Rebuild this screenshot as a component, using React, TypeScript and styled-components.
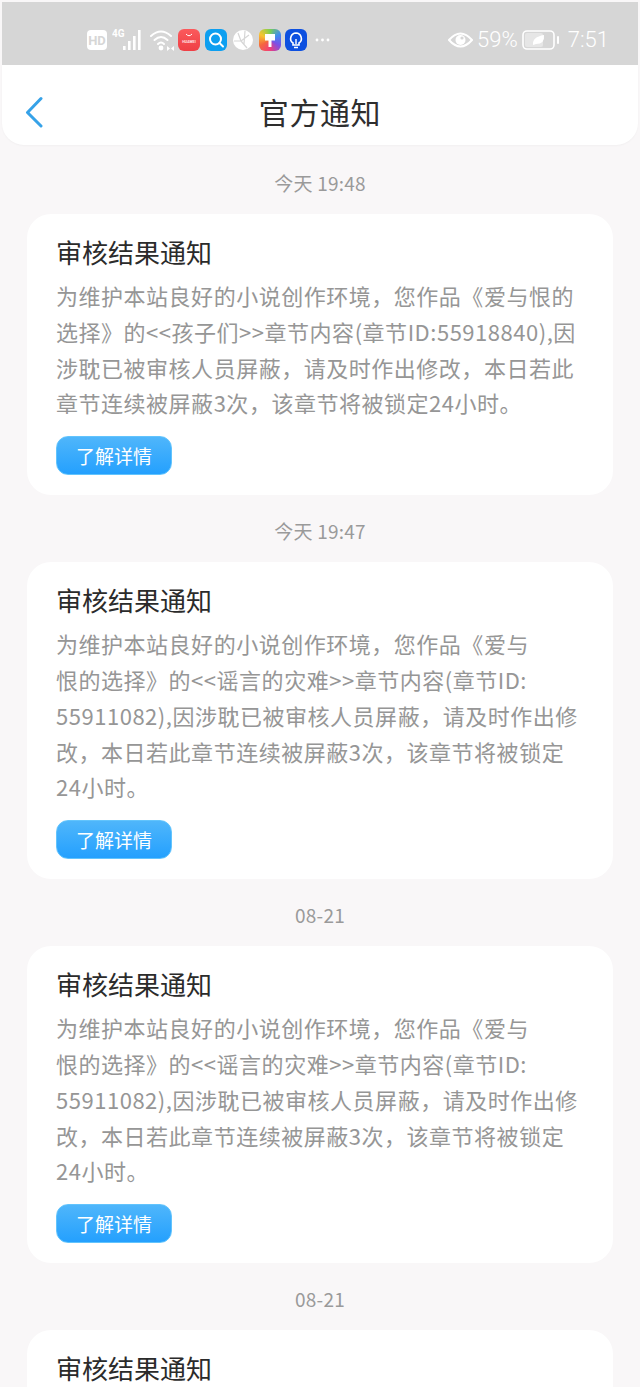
import React from "react";
import styled, { createGlobalStyle } from "styled-components";

const Global = createGlobalStyle`
  html, body { margin: 0; padding: 0; background: #f9f7f8; }
  body { font-family: "Noto Sans CJK SC", "Noto Sans", sans-serif; overflow: hidden; }
  #root { width: 640px; height: 1387px; overflow: hidden; }
`;

const Page = styled.div`
  width: 640px;
  height: 1387px;
  overflow: hidden;
  background: #f9f7f8;
  display: flex;
  flex-direction: column;
`;

const StatusBar = styled.div`
  height: 63px;
  margin: 2px 2px 0;
  background: #d6d6d6;
  display: flex;
  align-items: center;
  flex-shrink: 0;
  padding: 12px 0 0 85px;
  box-sizing: border-box;
  color: #fff;
`;

const StatusLeft = styled.div`
  display: flex;
  align-items: center;
`;

const StatusRight = styled.div`
  margin-left: auto;
  margin-right: 29px;
  display: flex;
  align-items: center;
`;

const StatusText = styled.span<{ $ml?: number }>`
  font-family: "Roboto", sans-serif;
  font-size: 22px;
  font-weight: 300;
  color: #fff;
  line-height: 24px;
  margin-left: ${(p) => p.$ml ?? 0}px;
`;

const AppIcon = styled.div<{ $bg: string; $ml?: number }>`
  width: 22px;
  height: 22px;
  border-radius: 6px;
  background: ${(p) => p.$bg};
  margin-left: ${(p) => p.$ml ?? 0}px;
  display: flex;
  align-items: center;
  justify-content: center;
  flex-shrink: 0;
`;

const Header = styled.header`
  height: 80px;
  margin: 0 2px;
  flex-shrink: 0;
  background: #fff;
  border-radius: 0 0 22px 22px;
  box-shadow: 0 1px 2px rgba(0, 0, 0, 0.03);
  position: relative;
  display: flex;
  align-items: center;
  justify-content: center;
`;

const BackIcon = styled.svg`
  position: absolute;
  left: 22px;
  top: 31px;
`;

const HeaderTitle = styled.h1`
  margin: 0;
  font-size: 30px;
  font-weight: 400;
  color: #2e2e2e;
  line-height: 40px;
  letter-spacing: 0.6px;
  position: relative;
  top: 6px;
`;

const Feed = styled.main`
  display: flex;
  flex-direction: column;
  padding: 2px 27px 0;
`;

const Stamp = styled.div`
  height: 67px;
  display: flex;
  align-items: center;
  justify-content: center;
  font-size: 19px;
  color: #9a9a9a;
  letter-spacing: 0.25px;
  padding-top: 3px;
  box-sizing: border-box;
  font-family: "Noto Sans CJK SC", sans-serif;
`;

const Card = styled.article`
  background: #fff;
  border-radius: 24px;
  padding: 20px 30px 20px 30px;
  display: flex;
  flex-direction: column;
  align-items: flex-start;
`;

const CardTitle = styled.h2`
  margin: 0 0 0 -1px;
  font-size: 26px;
  font-weight: 400;
  line-height: 36px;
  color: #2b2b2b;
  white-space: nowrap;
`;

const Body = styled.div`
  margin-top: 8px;
  margin-left: -1px;
  color: #969696;
  font-size: 22px;
  line-height: 35.8px;
  letter-spacing: 0.52px;
  white-space: nowrap;
`;

const Line = styled.div``;

const Button = styled.button`
  margin-top: 15px;
  margin-left: -1px;
  width: 116px;
  height: 39px;
  border: 1px solid #62c4fd;
  box-sizing: border-box;
  padding: 0;
  border-radius: 12px;
  background: linear-gradient(180deg, #4fb6fb 0%, #24a0fe 100%);
  color: #fff;
  font-family: "Noto Sans CJK SC", sans-serif;
  font-size: 19px;
  line-height: 37px;
`;

const lines1 = [
  "为维护本站良好的小说创作环境，您作品《爱与恨的",
  "选择》的<<孩子们>>章节内容(章节ID:55918840),因",
  "涉耽已被审核人员屏蔽，请及时作出修改，本日若此",
  "章节连续被屏蔽3次，该章节将被锁定24小时。",
];
const lines2 = [
  "为维护本站良好的小说创作环境，您作品《爱与",
  "恨的选择》的<<谣言的灾难>>章节内容(章节ID:",
  "55911082),因涉耽已被审核人员屏蔽，请及时作出修",
  "改，本日若此章节连续被屏蔽3次，该章节将被锁定",
  "24小时。",
];

const items = [
  { stamp: "今天 19:48", lines: lines1 },
  { stamp: "今天 19:47", lines: lines2 },
  { stamp: "08-21", lines: lines2 },
  { stamp: "08-21", lines: lines2 },
];

function Signal() {
  return (
    <svg width="34" height="26" viewBox="0 0 34 26" style={{ marginLeft: 5 }}>
      <text x="0" y="10" fontSize="10" fontWeight="700" fill="#fff" fontFamily="Roboto, sans-serif">4G</text>
      <g fill="#fff">
        <rect x="11" y="19" width="2.6" height="4" />
        <rect x="16" y="14" width="2.6" height="9" />
        <rect x="21" y="9" width="2.6" height="14" />
        <rect x="26" y="3" width="2.6" height="20" />
      </g>
    </svg>
  );
}

export default function App() {
  return (
    <Page>
      <Global />
      <StatusBar>
        <StatusLeft>
          <svg width="20" height="20" viewBox="0 0 20 20">
            <rect width="20" height="20" rx="4" fill="#fff" />
            <text x="10" y="15" textAnchor="middle" fontSize="13" fontWeight="700" fill="#d6d6d6" fontFamily="Roboto, sans-serif">HD</text>
          </svg>
          <Signal />
          <svg width="26" height="24" viewBox="0 0 26 24" style={{ marginLeft: 4 }}>
            <g fill="none" stroke="#fff" strokeWidth="2" strokeLinecap="round">
              <path d="M1 8 Q11 -1 21 8" />
              <path d="M4.5 12 Q11 6 17.5 12" />
              <path d="M8 16 Q11 13 14 16" />
            </g>
            <circle cx="11" cy="20" r="2.4" fill="#fff" />
            <path d="M17 18l3 2.5-3 2.5z M24 18l-3 2.5 3 2.5z" fill="#fff" />
          </svg>
          <AppIcon $bg="linear-gradient(180deg,#fb5a5c,#ef3f45)" $ml={2}>
            <svg width="22" height="22" viewBox="0 0 22 22">
              <path d="M8 5q3 3.5 6 0" fill="none" stroke="#fff" strokeWidth="1" />
              <text x="11" y="14" textAnchor="middle" fontSize="3.6" fontWeight="700" fill="#ffe3e3" fontFamily="Roboto, sans-serif">HUAWEI</text>
            </svg>
          </AppIcon>
          <AppIcon $bg="#0d9ff0" $ml={5}>
            <svg width="22" height="22" viewBox="0 0 22 22">
              <circle cx="10.5" cy="10" r="5.5" fill="none" stroke="#fff" strokeWidth="2" />
              <path d="M14.5 14l3.5 3.5" stroke="#fff" strokeWidth="2" strokeLinecap="round" />
            </svg>
          </AppIcon>
          <svg width="22" height="22" viewBox="0 0 22 22" style={{ marginLeft: 5 }}>
            <circle cx="11" cy="11" r="10" fill="#fff" />
            <path d="M6 4l3 8-7 0M9 12l6 7M9 12l8-6M13 2l-1 13" stroke="#d6d6d6" strokeWidth="1.2" fill="none" />
          </svg>
          <AppIcon $bg="conic-gradient(from 0deg,#7ccf52,#3f8cf0,#7a50e8,#f03f7a,#f5663f,#f7c531,#7ccf52)" $ml={5}>
            <svg width="22" height="22" viewBox="0 0 22 22">
              <path d="M6 5h10v6.5h-3.5v6.5h-3v-6.5H6z" fill="#fff" />
            </svg>
          </AppIcon>
          <AppIcon $bg="#0d50e0" $ml={4}>
            <svg width="22" height="22" viewBox="0 0 22 22">
              <path d="M11 4a5.5 5.5 0 0 0-3 10v2h6v-2a5.5 5.5 0 0 0-3-10z" fill="none" stroke="#fff" strokeWidth="1.6" />
              <path d="M9 18.5h4M11 10v5" stroke="#fff" strokeWidth="1.4" />
            </svg>
          </AppIcon>
          <svg width="18" height="6" viewBox="0 0 18 6" style={{ marginLeft: 7 }}>
            <g fill="#fff">
              <circle cx="3" cy="3" r="1.4" />
              <circle cx="8.5" cy="3" r="1.4" />
              <circle cx="14" cy="3" r="1.4" />
            </g>
          </svg>
        </StatusLeft>
        <StatusRight>
          <svg width="25" height="18" viewBox="0 0 25 18">
            <path d="M1 9Q12.5 -4 24 9Q12.5 22 1 9z" fill="none" stroke="#fff" strokeWidth="2" />
            <circle cx="12.5" cy="9" r="5" fill="#fff" />
            <circle cx="14" cy="7" r="1.6" fill="#d6d6d6" />
          </svg>
          <StatusText $ml={4}>59%</StatusText>
          <svg width="38" height="22" viewBox="0 0 38 22" style={{ marginLeft: 4 }}>
            <rect x="1" y="2" width="31" height="18" rx="4" fill="none" stroke="#fff" strokeWidth="1.6" />
            <rect x="3" y="4" width="18" height="14" rx="2" fill="#e6e6e6" />
            <rect x="35" y="7" width="2" height="8" rx="1" fill="#fff" />
            <path d="M11 16q-1-8 11-10q1 9-8 9z" fill="#fff" />
          </svg>
          <StatusText $ml={8}>7:51</StatusText>
        </StatusRight>
      </StatusBar>
      <Header>
        <BackIcon width="20" height="32" viewBox="0 0 20 32">
          <path d="M17 2.5L3.5 16.5 17 30" fill="none" stroke="#36a2e8" strokeWidth="3" strokeLinecap="round" strokeLinejoin="round" />
        </BackIcon>
        <HeaderTitle>官方通知</HeaderTitle>
      </Header>
      <Feed>
        {items.map((item, i) => (
          <React.Fragment key={i}>
            <Stamp>{item.stamp}</Stamp>
            <Card>
              <CardTitle>审核结果通知</CardTitle>
              <Body>
                {item.lines.map((l) => (
                  <Line key={l}>{l}</Line>
                ))}
              </Body>
              <Button>了解详情</Button>
            </Card>
          </React.Fragment>
        ))}
      </Feed>
    </Page>
  );
}
